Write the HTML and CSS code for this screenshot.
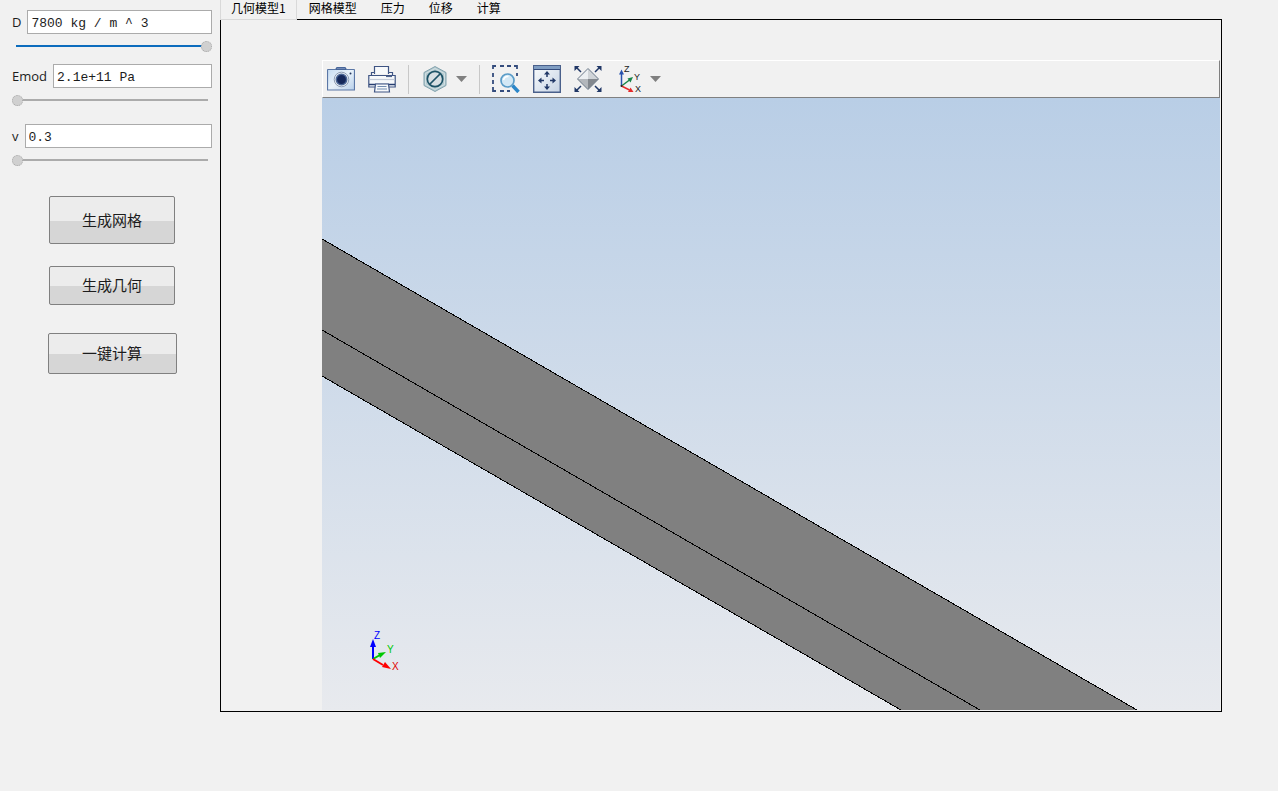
FILE: index.html
```html
<!DOCTYPE html>
<html lang="zh-CN">
<head>
<meta charset="utf-8">
<title>几何模型</title>
<link rel="stylesheet" href="styles.css">
</head>
<body>
<div class="app">
  <aside class="sidebar">
    <form class="params">
      <div class="param">
        <div class="field"><label for="density">D</label><input class="value" id="density" type="text" value="7800 kg / m ^ 3"></div>
        <input class="slider full" type="range" min="0" max="100" value="100" aria-label="D">
      </div>
      <div class="param">
        <div class="field"><label for="emod">Emod</label><input class="value" id="emod" type="text" value="2.1e+11 Pa"></div>
        <input class="slider" type="range" min="0" max="100" value="0" aria-label="Emod">
      </div>
      <div class="param last">
        <div class="field"><label for="poisson">v</label><input class="value" id="poisson" type="text" value="0.3"></div>
        <input class="slider" type="range" min="0" max="100" value="0" aria-label="v">
      </div>
    </form>
    <div class="actions">
      <button class="action mesh" type="button">生成网格</button>
      <button class="action geometry" type="button">生成几何</button>
      <button class="action compute" type="button">一键计算</button>
    </div>
  </aside>
  <main class="main">
    <nav class="tabs" role="tablist">
      <button class="tab active" type="button" role="tab" aria-selected="true">几何模型1</button>
      <button class="tab" type="button" role="tab">网格模型</button>
      <button class="tab" type="button" role="tab">压力</button>
      <button class="tab" type="button" role="tab">位移</button>
      <button class="tab" type="button" role="tab">计算</button>
    </nav>
    <section class="panel">
      <div class="viewer">
        <div class="toolbar" role="toolbar">
          <div class="group">
            <button class="tool" type="button" aria-label="截图">
              <svg width="28" height="28" viewBox="0 0 28 28">
                <defs><linearGradient id="cam" x1="0" y1="0" x2="1" y2="1"><stop offset="0" stop-color="#c3daf1"/><stop offset=".5" stop-color="#e9f2fa"/><stop offset="1" stop-color="#b8d0ea"/></linearGradient></defs>
                <path d="M1 4.500H8.500L10 2.500H18L19.500 4.500H27Q27.500 4.500 27.500 5V25H.5V5Q.5 4.500 1 4.500Z" fill="url(#cam)" stroke="#5b77a6" stroke-width="1.200"/>
                <path d="M10 2.500h8l1 2H9z" fill="#7088b4" stroke="#486699"/>
                <circle cx="14.500" cy="14.500" r="7.300" fill="#e8eef4" stroke="#8c9bb2"/>
                <circle cx="14.500" cy="14.500" r="5.200" fill="#15285a" stroke="#4c6796" stroke-width="1.500"/>
                <circle cx="23.500" cy="8.500" r="1" fill="#24365f"/>
              </svg>
            </button>
            <button class="tool" type="button" aria-label="打印">
              <svg width="28" height="28" viewBox="0 0 28 28" fill="#f7f9fb" stroke="#3e5483" stroke-width="1.200">
                <path d="M6.500 9V1.500h14V9"/>
                <path d="M6.500 7.500H3.500V10.500M20.500 7.500h4v3M.8 10.500h26.400v11.500H.8z"/>
                <path d="M1.500 14.500h25" stroke="#c2cad8"/>
                <path d="M18 11.500h6" stroke="#51658e"/>
                <path d="M1 19.500h26" stroke="#263d70" stroke-width="1.500"/>
                <path d="M7.500 19h13l1 8H6.500z"/>
                <path d="M9.500 21.500h9M9 24h10" stroke="#738db1"/>
              </svg>
            </button>
          </div>
          <span class="separator"></span>
          <div class="group menu">
            <button class="tool" type="button" aria-label="隐藏">
              <svg width="28" height="28" viewBox="0 0 28 28">
                <path d="M14 1.500 25 7.500V20.500L14 26.500 3 20.500V7.500Z" fill="#b3c9cf" stroke="#83a3ae"/>
                <path d="M14 3.500 23.500 8.500V19.500L14 24.500 4.500 19.500V8.500Z" fill="none" stroke="#d3e0e3"/>
                <circle cx="14" cy="14" r="7.700" fill="#d7dfe3" stroke="#1d5266" stroke-width="1.700"/>
                <path d="m9 19 10-10" stroke="#1d5266" stroke-width="1.700"/>
              </svg>
            </button>
            <button class="tool" type="button" aria-label="更多"><svg width="11" height="28" viewBox="0 0 11 28"><path d="M0 11h11L5.500 17Z" fill="#808080"/></svg></button>
          </div>
          <span class="separator"></span>
          <div class="group">
            <button class="tool" type="button" aria-label="框选缩放">
              <svg width="28" height="28" viewBox="0 0 28 28">
                <path d="M1 4V1H4M8 1h4M15 1h4M22 1h3V4M25 8v3M1 8v4M1 15v4M1 22v4H4M8 26h4M15 26h3" fill="none" stroke="#344c7d" stroke-width="1.800"/>
                <path d="m20.500 20.500 6 6.500" stroke="#2b86c8" stroke-width="3.500"/>
                <circle cx="15.500" cy="15.500" r="6.500" fill="#d3e8f5" stroke="#5a9cc8" stroke-width="1.700"/>
                <path d="M11.500 15q1-4 5-3.500" fill="none" stroke="#fff" stroke-width="1.500"/>
              </svg>
            </button>
            <button class="tool" type="button" aria-label="缩放到窗口">
              <svg width="28" height="28" viewBox="0 0 28 28">
                <defs><linearGradient id="win" x1="0" y1="0" x2="1" y2="1"><stop offset="0" stop-color="#fafcfd"/><stop offset="1" stop-color="#c6d3e4"/></linearGradient></defs>
                <path d="M.7.7h26.600v26.600H.7z" fill="url(#win)" stroke="#4a608b" stroke-width="1.400"/>
                <path d="M1 1h26v3H1z" fill="#7f9dc2"/><path d="M1 4.500h26" stroke="#344c7d"/>
                <path d="M14 12V8M14 19v4M11 15.500H7M17 15.500h4" stroke="#203766" stroke-width="1.500"/>
                <path d="m14 6-3 3.500h6zM14 25l-3-3.500h6zM5 15.500l3.500-3v6zM23 15.500l-3.500-3v6z" fill="#203766"/>
              </svg>
            </button>
            <button class="tool" type="button" aria-label="缩放到范围">
              <svg width="28" height="28" viewBox="0 0 28 28">
                <path d="M14 3.500 24.500 14H3.500Z" fill="#eceff2"/><path d="M14 3.500 24.500 14H14Z" fill="#d0d4d8"/>
                <path d="M3.500 14H14V24.500Z" fill="#b3b7bc"/><path d="M14 14h10.500L14 24.500Z" fill="#83888e"/>
                <path d="M14 3.500 24.500 14 14 24.500 3.500 14Z" fill="none" stroke="#6c7989"/>
                <path d="m7 7-5-5M21 7l5-5M7 21l-5 5M21 21l5 5" stroke="#203766" stroke-width="1.500"/>
                <path d="M.5 1H5.500L.5 6ZM27.500 1V6L22.500 1ZM.5 27V22L5.500 27ZM27.500 27H22.500l5-5Z" fill="#203766"/>
              </svg>
            </button>
            <div class="group menu">
              <button class="tool" type="button" aria-label="视图方向">
                <svg width="28" height="28" viewBox="0 0 28 28">
                  <path d="M6.500 21V8" stroke="#2852ae" stroke-width="1.500"/><path d="m6.500 4.500-2.500 5h5z" fill="#2852ae"/>
                  <path d="m6.500 21 8-6" stroke="#178548" stroke-width="1.500"/><path d="m18 12-5.500 1.500 3 4z" fill="#178548"/>
                  <path d="m6.500 21 8 4" stroke="#e52a2a" stroke-width="1.500"/><path d="m18.500 27-3-4.500-2.500 4.500z" fill="#e52a2a"/>
                  <circle cx="6.500" cy="21" r="1" fill="#222"/>
                  <text class="axis" x="9" y="7">Z</text><text class="axis" x="19" y="15">Y</text><text class="axis" x="20" y="27">X</text>
                </svg>
              </button>
              <button class="tool" type="button" aria-label="更多视图"><svg width="11" height="28" viewBox="0 0 11 28"><path d="M0 11h11L5.500 17Z" fill="#808080"/></svg></button>
            </div>
          </div>
        </div>
        <div class="scene">
          <svg class="model" viewBox="0 0 898 612" preserveAspectRatio="xMinYMin slice">
            <g shape-rendering="crispEdges">
              <path d="M0 141 815 612H579L0 278Z" fill="#808080"/>
              <path d="M0 141 815 612M0 232 658 612M0 278 579 612" fill="none" stroke="#000"/>
            </g>
            <path d="M51 561V547" stroke="#00f" stroke-width="2"/><path d="m51 541-3 8h6z" fill="#00f"/>
            <path d="m51 561 7-4" stroke="#00c800" stroke-width="2"/><path d="m64 554-8 1 2 5z" fill="#00c800"/>
            <path d="m51 561 10 6" stroke="#f00" stroke-width="2"/><path d="m69 571-6-7-3 5z" fill="#f00"/>
            <text class="triad z" x="52" y="541">Z</text><text class="triad y" x="65" y="555">Y</text><text class="triad x" x="70" y="572">X</text>
          </svg>
        </div>
      </div>
    </section>
  </main>
</div>
</body>
</html>
```
FILE: styles.css
```css
* { box-sizing: border-box; }

body {
  margin: 0;
  background: #f1f1f1;
  color: #1c1c1c;
  font-family: "Open Sans", "Noto Sans CJK SC", sans-serif;
}

button, input { margin: 0; font: inherit; color: inherit; }

.app {
  display: grid;
  grid-template-columns: 220px minmax(0, 1fr);
  min-height: 100vh;
}

.sidebar { padding: 10px 8px 0 12px; }

.param { display: flex; flex-direction: column; gap: 6px; margin-bottom: 12px; }
.param.last { margin: 18px 0 0; }

.field { display: flex; align-items: center; gap: 6px; font-size: 13px; }
.field label { line-height: 16px; }

.value {
  flex: 1;
  min-width: 0;
  height: 24px;
  padding: 2px 3px 0;
  border: 1px solid #ababab;
  background: #fff;
  font: 13px "Liberation Mono", monospace;
}

.slider {
  appearance: none;
  width: 200px;
  height: 12px;
  background: linear-gradient(#ababab, #ababab) 4px center / 192px 2px no-repeat;
}
.slider.full { background-image: linear-gradient(#0c6cbd, #0c6cbd); }
.slider::-webkit-slider-thumb {
  appearance: none;
  width: 11px;
  height: 11px;
  border: 1px dotted #a8a8a8;
  border-radius: 50%;
  background: #d0d0d0;
}

.actions {
  display: flex;
  flex-direction: column;
  align-items: center;
  margin-top: 30px;
}

.action {
  width: 126px;
  padding: 0 0 2px;
  border: 1px solid #808080;
  border-radius: 2px;
  background: linear-gradient(#ececec 52%, #d6d6d6 52%);
  font: 15px "Noto Sans CJK SC", sans-serif;
}
.mesh { height: 48px; }
.geometry { height: 39px; margin-top: 22px; }
.compute { width: 129px; height: 41px; margin-top: 28px; }

.main {
  display: flex;
  flex-direction: column;
  padding: 0 56px 79px 0;
}

.tabs { display: flex; height: 20px; margin-bottom: -1px; z-index: 1; }

.tab {
  padding: 0 12px 4px;
  border: 0;
  background: none;
  color: #000;
  font: 12px/16px "Noto Sans CJK SC", sans-serif;
}
.tab.active {
  padding: 0 10px 4px;
  border: solid #d9d9d9;
  border-width: 0 1px 1px;
  background: #f1f1f1;
}

.panel {
  display: flex;
  flex: 1;
  padding: 40px 1px 1px 101px;
  border: 1px solid #000;
}

.viewer { display: flex; flex: 1; flex-direction: column; min-width: 0; }

.toolbar {
  display: flex;
  align-items: center;
  height: 38px;
  padding: 0 4px;
  border: 1px solid #fff;
  border-right-color: #808080;
  border-bottom-color: #808080;
}

.group { display: flex; gap: 13px; }
.group.menu { gap: 7px; }
.tool { display: flex; padding: 0; border: 0; background: none; }
.separator { width: 1px; height: 29px; margin: 0 12px; background: #c8c8c8; }
.axis { fill: #222; font: 9px "Liberation Sans", sans-serif; }

.scene {
  display: grid;
  flex: 1;
  min-height: 0;
  background: linear-gradient(#b9cee6, #e8eaee);
}
.model { width: 100%; height: 100%; min-height: 0; }
.triad { font: 10px "Liberation Sans", sans-serif; }
.z { fill: #00f; }
.y { fill: #00c800; }
.x { fill: #e00000; }
```
